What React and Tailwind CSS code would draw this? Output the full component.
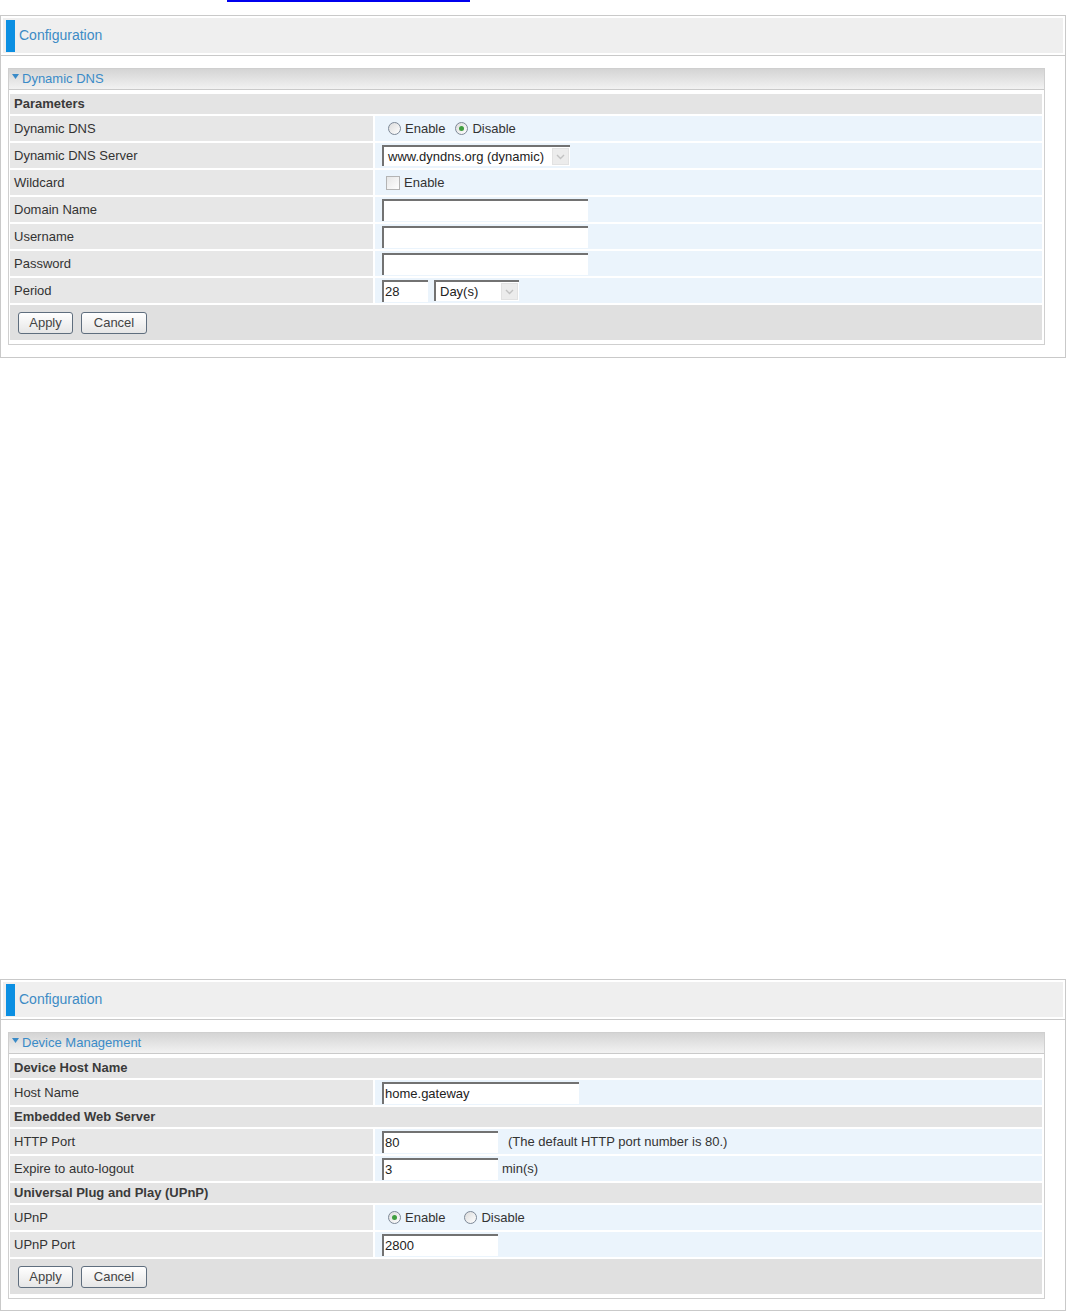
import React from "react";

const FONT = { fontFamily: '"Liberation Sans", Arial, sans-serif' };

function Radio({ checked, className = "" }) {
  return (
    <span
      className={`flex items-center justify-center w-[13px] h-[13px] rounded-full border border-[#7d8897] bg-linear-to-br from-[#dcdcdc] to-white shrink-0 ${className}`}
    >
      {checked && <span className="w-[5px] h-[5px] rounded-full bg-[#3f9e3f]" />}
    </span>
  );
}

function Checkbox({ className = "" }) {
  return (
    <span
      className={`block w-[14px] h-[14px] border border-[#b4b4b4] bg-linear-to-br from-[#e6e6e6] to-white shrink-0 ${className}`}
    />
  );
}

function TextBox({ w, value, className = "" }) {
  return (
    <div
      className={`h-[22px] ${w} bg-white border-t-2 border-l-2 border-t-[#727272] border-l-[#727272] flex items-center pl-[1px] text-[13px] text-[#222] shrink-0 ${className}`}
    >
      {value}
    </div>
  );
}

function Select({ w, value, className = "" }) {
  return (
    <div
      className={`h-[21px] ${w} bg-white border-t-2 border-l-2 border-t-[#727272] border-l-[#727272] flex items-center justify-between pl-[4px] pr-[1px] text-[13px] text-[#222] shrink-0 ${className}`}
    >
      <span>{value}</span>
      <span className="w-[17px] h-[17px] bg-[#ececec] border border-[#e2e2e2] flex items-center justify-center">
        <svg width="9" height="6" viewBox="0 0 9 6">
          <path d="M1 1 L4.5 4.5 L8 1" fill="none" stroke="#c2c2c2" strokeWidth="1.4" />
        </svg>
      </span>
    </div>
  );
}

function Section({ children }) {
  return (
    <div className="h-[20px] bg-[#e4e4e4] flex items-center pl-[4px] font-bold text-[13px] text-[#3a3a3a]">
      {children}
    </div>
  );
}

function Row({ label, children }) {
  return (
    <div className="flex h-[25px] gap-[2px]">
      <div className="w-[363px] bg-[#e7e7e7] flex items-center pl-[4px] text-[13px] text-[#333]">
        {label}
      </div>
      <div className="flex-1 bg-[#ebf4fc] flex items-center pl-[7px] text-[13px] text-[#333]">
        {children}
      </div>
    </div>
  );
}

function Button({ w, children }) {
  return (
    <div
      className={`${w} h-[22px] rounded-[3px] border border-[#5f6e7e] bg-linear-to-b from-white to-[#e6e6e6] flex items-center justify-center text-[13px] text-[#444]`}
    >
      {children}
    </div>
  );
}

function Buttons() {
  return (
    <div className="h-[35px] bg-[#e0e0e0] flex items-center pl-[8px] gap-[8px]">
      <Button w="w-[55px]">Apply</Button>
      <Button w="w-[66px]">Cancel</Button>
    </div>
  );
}

function Frame({ h, title, children }) {
  return (
    <div className={`${h} border border-[#c9c9c9]`}>
      <div className="px-[2px] pt-[2px] pb-[2px] border-b border-[#c9c9c9]">
        <div className="h-[35px] bg-[#efefef] flex items-center">
          <div className="ml-[3px] w-[9px] h-[32px] bg-[#0b8fe2]" />
          <span className="ml-[4px] text-[14px] text-[#3d8bc5]">Configuration</span>
        </div>
      </div>
      <div className="pt-[12px] pl-[7px]">
        <div className="w-[1037px] border border-[#cfcfcf]">
          <div className="h-[21px] bg-linear-to-b from-[#d4d4d4] to-[#f2f2f2] border-b border-[#cacaca] flex items-center pl-[3px] text-[13px] text-[#3a8bc8]">
            <svg width="7" height="5" viewBox="0 0 7 5" className="mr-[3px] mb-[5px]">
              <path d="M0 0 L7 0 L3.5 5 Z" fill="#3a8bc8" />
            </svg>
            <span>{title}</span>
          </div>
          <div className="pl-[1px] pr-[2px] pt-[4px] pb-[4px] flex flex-col gap-[2px]">
            {children}
          </div>
        </div>
      </div>
    </div>
  );
}

export default function App() {
  return (
    <div className="w-[1066px] h-[1311px] bg-white overflow-hidden" style={FONT}>
      <div className="ml-[227px] w-[243px] h-[2px] bg-[#0000ee]" />
      <div className="mt-[13px]">
        <Frame h="h-[343px]" title="Dynamic DNS">
          <Section>Parameters</Section>
          <Row label="Dynamic DNS">
            <Radio className="ml-[6px]" />
            <span className="ml-[4px]">Enable</span>
            <Radio checked className="ml-[10px]" />
            <span className="ml-[4px]">Disable</span>
          </Row>
          <Row label="Dynamic DNS Server">
            <Select w="w-[188px]" value="www.dyndns.org (dynamic)" />
          </Row>
          <Row label="Wildcard">
            <Checkbox className="ml-[4px]" />
            <span className="ml-[4px]">Enable</span>
          </Row>
          <Row label="Domain Name">
            <TextBox w="w-[206px]" value="" />
          </Row>
          <Row label="Username">
            <TextBox w="w-[206px]" value="" />
          </Row>
          <Row label="Password">
            <TextBox w="w-[206px]" value="" />
          </Row>
          <Row label="Period">
            <TextBox w="w-[46px]" value="28" />
            <Select w="w-[85px]" value="Day(s)" className="ml-[6px]" />
          </Row>
          <Buttons />
        </Frame>
      </div>
      <div className="mt-[621px]">
        <Frame h="h-[332px]" title="Device Management">
          <Section>Device Host Name</Section>
          <Row label="Host Name">
            <TextBox w="w-[197px]" value="home.gateway" />
          </Row>
          <Section>Embedded Web Server</Section>
          <Row label="HTTP Port">
            <TextBox w="w-[116px]" value="80" />
            <span className="ml-[10px]">(The default HTTP port number is 80.)</span>
          </Row>
          <Row label="Expire to auto-logout">
            <TextBox w="w-[116px]" value="3" />
            <span className="ml-[4px]">min(s)</span>
          </Row>
          <Section>Universal Plug and Play (UPnP)</Section>
          <Row label="UPnP">
            <Radio checked className="ml-[6px]" />
            <span className="ml-[4px]">Enable</span>
            <Radio className="ml-[19px]" />
            <span className="ml-[4px]">Disable</span>
          </Row>
          <Row label="UPnP Port">
            <TextBox w="w-[116px]" value="2800" />
          </Row>
          <Buttons />
        </Frame>
      </div>
    </div>
  );
}
